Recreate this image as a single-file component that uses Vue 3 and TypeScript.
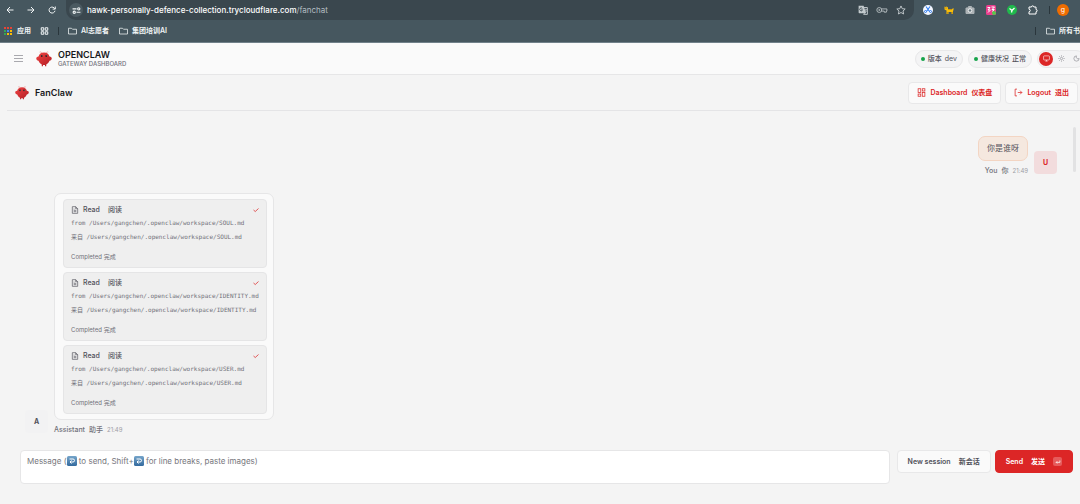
<script setup lang="ts">
import { ref } from 'vue'

interface ToolCall {
  id: number
  path: string
}

const root = '/Users/gangchen/.openclaw/workspace/'
const toolCalls: ToolCall[] = [
  { id: 1, path: root + 'SOUL.md' },
  { id: 2, path: root + 'IDENTITY.md' },
  { id: 3, path: root + 'USER.md' },
]
const folders: string[] = ['AI志愿者', '集团培训AI']
const appDots: string[] = ['#ea4335', '#ea4335', '#ea4335', '#34a853', '#4285f4', '#fbbc04', '#34a853', '#fbbc04', '#fbbc04']
const draft = ref<string>('')
const address = ref<string>('')
</script>

<template>
  <div class="page">
    <header class="browser">
      <div class="toolbar">
        <nav class="nav-buttons">
          <button type="button" aria-label="Back"><svg viewBox="0 0 16 16"><path d="M15 8H2M8 2L2 8l6 6" /></svg></button>
          <button type="button" aria-label="Forward"><svg viewBox="0 0 16 16"><path d="M1 8h13M8 2l6 6-6 6" /></svg></button>
          <button type="button" aria-label="Reload"><svg viewBox="0 0 16 16"><path d="M14 9.500A6 6 0 1 1 12.300 3.800L14.500 6M14.500 1v5.200H9.300" /></svg></button>
        </nav>
        <div class="omnibox">
          <button type="button" class="site-info" aria-label="Site settings">
            <svg viewBox="0 0 16 16"><path d="M1 5h7M8 11h7" /><circle cx="12" cy="5" r="2" /><circle cx="4" cy="11" r="2" /></svg>
          </button>
          <div class="address">
            <input id="address" v-model="address" type="text" autocomplete="off" />
            <label v-show="!address" for="address">hawk-personally-defence-collection.trycloudflare.com<span>/fanchat</span></label>
          </div>
          <div class="omni-actions">
            <button type="button" aria-label="Translate">
              <svg viewBox="0 0 16 16"><path d="M1 1h8l4 12H2a1 1 0 0 1-1-1z" fill="#c3cacd" stroke="none" /><path d="M9.500 4H15v11H9l2-3" /><path d="M6.800 5.400A2.300 2.300 0 1 0 7.200 8H5" stroke="#3a474e" /><path d="M10.500 7h4M12.500 6v1M11 11c1.500-1 2.300-2.500 2.500-4M11.500 8.500l2.500 2.500" stroke-width="1" /></svg>
            </button>
            <button type="button" aria-label="Passwords">
              <svg class="key" viewBox="0 0 22 16"><circle cx="6" cy="8" r="4.500" /><circle cx="6" cy="8" r="1" /><path d="M10 6h10v4h-1v2h-4v-2h-5" /></svg>
            </button>
            <button type="button" aria-label="Bookmark">
              <svg viewBox="0 0 16 16"><path d="M8 1.500l2 4.400 4.700.5-3.500 3.200 1 4.800L8 12l-4.200 2.400 1-4.800L1.300 6.400 6 5.900z" /></svg>
            </button>
          </div>
        </div>
        <div class="extensions">
          <button type="button" aria-label="Scissors extension">
            <svg viewBox="0 0 20 20"><circle cx="10" cy="10" r="10" fill="#f4f8ff" stroke="none" /><path d="M6 3l7 10M14 3L7 13" stroke="#2f7df0" stroke-width="2.200" /><circle cx="5" cy="13" r="2" stroke="#2f7df0" /><circle cx="15" cy="13" r="2" stroke="#2f7df0" /></svg>
          </button>
          <button type="button" aria-label="Tiger extension">
            <svg viewBox="0 0 20 20"><path d="M1 3l2 1 2-1 3 2v3h8l3-2v4l-1 2v6h-3v-4H9v4H5v-7L1 9z" fill="#f7bd0c" stroke="none" /><path d="M10 8v2M14 8v2M3 6h2M6 16h2M15 16h3" stroke="#8a5c06" stroke-width="1.500" /></svg>
          </button>
          <button type="button" aria-label="Camera extension">
            <svg viewBox="0 0 20 20"><path d="M2 6h4l1-3h6l1 3h4v11H2z" fill="#adb4b7" stroke="#adb4b7" /><circle cx="10" cy="11" r="3.500" fill="#66767d" stroke="#f1f3f4" stroke-width="2" /></svg>
          </button>
          <button type="button" aria-label="Pink extension">
            <svg viewBox="0 0 20 20"><rect width="20" height="20" rx="3" fill="#ea3f8e" stroke="none" /><path d="M3 5h5L4 10h5M4 15l4-4M11 4h6l-5 5h5M12 13l4-3" stroke="#fff" /><circle cx="16" cy="16" r="4" fill="#55c94b" stroke="none" /></svg>
          </button>
          <button type="button" aria-label="Green extension">
            <svg viewBox="0 0 20 20"><circle cx="10" cy="10" r="10" fill="#20b94c" stroke="none" /><path d="M5 7l5 4 5-5M10 11l-1 4" stroke="#fff" stroke-width="2.500" /></svg>
          </button>
          <button type="button" aria-label="Extensions">
            <svg viewBox="0 0 20 20"><path d="M2 4h5a2.300 2.300 0 0 1 4.600 0H16v5a2.300 2.300 0 0 1 0 4.600V18H2v-4.500a2.500 2.500 0 0 0 0-5z" stroke="#fff" stroke-width="2" /></svg>
          </button>
          <i class="divider"></i>
          <button type="button" class="profile">g</button>
        </div>
      </div>
      <nav class="bookmarks">
        <a href="#apps"><span class="app-dots"><i v-for="(c, i) in appDots" :key="i" :style="{ background: c }"></i></span>应用</a>
        <a href="#grid" aria-label="Grid" class="grid-link"><svg viewBox="0 0 16 16"><path d="M1.500 1.500h5v5h-5zM9.500 1.500h5v5h-5zM1.500 9.500h5v5h-5zM9.500 9.500h5v5h-5z" stroke-width="2" /></svg></a>
        <i class="divider"></i>
        <a v-for="name in folders" :key="name" href="#folder" class="folder"><svg viewBox="0 0 18 16"><path d="M1 2.500h6l2 2h8v9.500H1z" /></svg>{{ name }}</a>
        <span class="all-bookmarks">
          <i class="divider"></i>
          <a href="#all" class="folder"><svg viewBox="0 0 18 16"><path d="M1 2.500h6l2 2h8v9.500H1z" /></svg>所有书</a>
        </span>
      </nav>
    </header>

    <svg class="defs" aria-hidden="true">
      <defs>
        <linearGradient id="shell" x1="0" y1="0" x2="1" y2="1"><stop offset="0" stop-color="#f04444" /><stop offset="1" stop-color="#b01c22" /></linearGradient>
        <symbol id="claw" viewBox="0 0 32 32">
          <path d="M12 4C11 2 9.500 1.500 8 2M20 4c1-2 2.500-2.500 4-2" fill="none" stroke="#e86a6a" stroke-width="1" stroke-linecap="round" />
          <path d="M16 3c6 0 9.500 3 11 8 3 0 4.500 2 4.500 4s-2 4-4.500 4.500c-1.500 3.500-3.500 6-6.500 7.500v3.500h-2.500V28h-4v2.500h-2.500V27C8.500 25.500 6.500 23 5 19.500 2.500 19 .5 17 .5 15s1.500-4 4.500-4c1.500-5 5-8 11-8z" fill="url(#shell)" />
          <circle cx="11.500" cy="10" r="1.800" fill="#2a2024" /><circle cx="20.500" cy="10" r="1.800" fill="#2a2024" />
          <circle cx="12" cy="9.500" r=".7" fill="#1cb8a8" /><circle cx="21" cy="9.500" r=".7" fill="#1cb8a8" />
        </symbol>
        <linearGradient id="keycap" x1="0" y1="0" x2="0" y2="1"><stop offset="0" stop-color="#76a5ca" /><stop offset="1" stop-color="#336a9e" /></linearGradient>
        <symbol id="return" viewBox="0 0 20 20">
          <rect width="20" height="20" rx="3" fill="url(#keycap)" />
          <path d="M5 6h7a3 3 0 0 1 0 6H6M9 9l-3 3 3 3" fill="none" stroke="#fff" stroke-width="2" />
        </symbol>
      </defs>
    </svg>

    <header class="topbar">
      <button type="button" class="menu" aria-label="Menu"><i></i><i></i><i></i></button>
      <svg class="logo"><use href="#claw" /></svg>
      <div class="brand">
        <strong>OPENCLAW</strong>
        <small>GATEWAY DASHBOARD</small>
      </div>
      <div class="status">
        <span class="pill"><i></i><span>版本</span><span class="value">dev</span></span>
        <span class="pill"><i></i><span>健康状况</span><span>正常</span></span>
        <div class="themes">
          <button type="button" class="active" aria-label="System theme"><svg viewBox="0 0 24 24"><rect x="2" y="3" width="20" height="14" rx="2" /><path d="M8 21h8M12 17v4" /></svg></button>
          <button type="button" aria-label="Light theme"><svg viewBox="0 0 24 24"><circle cx="12" cy="12" r="4" /><path d="M12 1v4M12 19v4M1 12h4M19 12h4M4 4l3 3M17 17l3 3M4 20l3-3M17 7l3-3" /></svg></button>
          <button type="button" aria-label="Dark theme"><svg viewBox="0 0 24 24"><path d="M12 3a6.500 6.500 0 0 0 9 9 9 9 0 1 1-9-9z" /></svg></button>
        </div>
      </div>
    </header>

    <main>
      <div class="subbar">
        <svg class="logo small"><use href="#claw" /></svg>
        <h1>FanClaw</h1>
        <div class="links">
          <a href="#dashboard" class="action"><svg viewBox="0 0 24 24"><rect x="3" y="2" width="7" height="10" /><rect x="14" y="2" width="7" height="6" /><rect x="14" y="12" width="7" height="10" /><rect x="3" y="16" width="7" height="6" /></svg><span>Dashboard</span><span>仪表盘</span></a>
          <button type="button" class="action"><svg viewBox="0 0 24 24"><path d="M8 21H3V3h5M16 17l5-5-5-5M21 12H10" /></svg><span>Logout</span><span>退出</span></button>
        </div>
      </div>

      <section class="thread">
        <i class="thumb"></i>
        <article class="message user">
          <div class="body">
            <p class="bubble">你是谁呀</p>
            <p class="meta"><span>You</span><span>你</span><time>21:49</time></p>
          </div>
          <div class="avatar">U</div>
        </article>
        <article class="message assistant">
          <div class="avatar">A</div>
          <div class="body">
            <div class="stack">
              <section v-for="call in toolCalls" :key="call.id" class="tool">
                <h2>
                  <svg viewBox="0 0 24 24"><path d="M14 2H4v20h16V8zM14 2v6h6M8 13h8M8 17h8M8 9h2" /></svg>
                  <span>Read</span><span>阅读</span>
                  <svg class="check" viewBox="0 0 24 24"><path d="M22 6L9 18l-7-6" /></svg>
                </h2>
                <code>from {{ call.path }}</code>
                <code>来自 {{ call.path }}</code>
                <p>Completed 完成</p>
              </section>
            </div>
            <p class="meta"><span>Assistant</span><span>助手</span><time>21:49</time></p>
          </div>
        </article>
      </section>

      <form class="composer" @submit.prevent>
        <div class="field">
          <textarea id="draft" v-model="draft"></textarea>
          <label v-show="!draft" for="draft">Message (<svg><use href="#return" /></svg> to send, Shift+<svg><use href="#return" /></svg> for line breaks, paste images)</label>
        </div>
        <button type="button" class="new"><span>New session</span><span>新会话</span></button>
        <button type="submit" class="send"><span>Send</span><span>发送</span><kbd><svg viewBox="0 0 16 16"><path d="M13 4v5H3M6 6L3 9l3 3" /></svg></kbd></button>
      </form>
    </main>
  </div>
</template>

<style>
body {
  margin: 0;
  background: #f4f4f4;
}
</style>

<style scoped>
.page {
  min-height: 100vh;
  display: flex;
  flex-direction: column;
  overflow: hidden;
  font-family: Inter, "Noto Sans CJK SC", sans-serif;
  font-size: 7px;
  line-height: 10px;
  color: #52525b;
}
.page * {
  box-sizing: border-box;
}
p, h1, h2 {
  margin: 0;
}
a {
  text-decoration: none;
  color: inherit;
}
button {
  font: inherit;
  color: inherit;
  background: none;
  border: 0;
  padding: 0;
}
svg {
  flex: none;
  fill: none;
  stroke: currentColor;
  stroke-width: 2;
}
.defs {
  position: absolute;
  width: 0;
  height: 0;
}

.browser {
  background: #46575f;
  color: #f1f5f6;
  border-bottom: 1px solid #71818a;
}
.toolbar {
  height: 20px;
  display: flex;
  align-items: center;
  padding: 0 11px 0 5px;
}
.toolbar button {
  display: grid;
  place-items: center;
}
.nav-buttons {
  display: flex;
  gap: 11px;
  margin-right: 9px;
}
.nav-buttons svg {
  display: block;
  width: 10px;
  height: 8px;
}
.omnibox {
  flex: 1;
  height: 20px;
  border-radius: 0 0 10px 10px;
  background: #3a474e;
  display: flex;
  align-items: center;
  gap: 4px;
  padding: 0 8px 0 3px;
}
.site-info {
  width: 14px;
  height: 14px;
  border-radius: 7px;
  background: #4b5a61;
}
.site-info svg {
  width: 9px;
  height: 9px;
}
.address {
  flex: 1;
  position: relative;
  height: 14px;
}
.address input {
  width: 100%;
  height: 100%;
  border: 0;
  padding: 0;
  background: transparent;
  color: #fff;
  font: 500 8px Inter, sans-serif;
}
.address label {
  position: absolute;
  inset: 0;
  font-size: 8px;
  line-height: 14px;
  font-weight: 500;
  color: #fff;
}
.address span {
  font-weight: 400;
  color: #b3bdc1;
}
.omni-actions {
  display: flex;
  align-items: center;
  gap: 8px;
  color: #c3cacd;
}
.omni-actions svg {
  width: 10px;
  height: 10px;
  stroke-width: 1.500;
}
.omni-actions .key {
  width: 12px;
}
.extensions {
  display: flex;
  align-items: center;
  gap: 11px;
  margin-left: 9px;
}
.extensions svg {
  width: 10px;
  height: 10px;
}
.extensions .divider {
  margin-right: -4px;
}
.profile {
  width: 12px;
  height: 12px;
  border-radius: 6px;
  background: #ef6c00;
  color: #fff;
}
.divider {
  width: 1px;
  height: 8px;
  background: #2a363c;
}
.bookmarks {
  height: 22px;
  display: flex;
  align-items: center;
  font-weight: 600;
  padding-left: 4px;
}
.bookmarks a {
  display: flex;
  align-items: center;
  gap: 5px;
  white-space: nowrap;
}
.bookmarks svg {
  width: 9px;
  height: 8px;
  stroke-width: 1.500;
}
.app-dots {
  display: grid;
  grid-template-columns: repeat(3, 2px);
  gap: 1px;
}
.app-dots i {
  height: 2px;
}
.bookmarks .grid-link {
  margin: 0 9px;
}
.bookmarks > .divider {
  margin-right: 9px;
}
.bookmarks .folder {
  gap: 4px;
  margin-right: 10px;
}
.all-bookmarks {
  margin-left: auto;
  display: flex;
  align-items: center;
  gap: 10px;
}
.all-bookmarks .folder {
  margin-right: 0;
}

.topbar {
  height: 32px;
  display: flex;
  align-items: center;
  padding-left: 14px;
  background: #fafafa;
  border-bottom: 1px solid #e6e6e7;
}
.menu {
  width: 9px;
  display: grid;
  gap: 2px;
  margin-right: 13px;
}
.menu i {
  height: 1px;
  background: #a9a9ae;
}
.logo {
  width: 16px;
  height: 16px;
  stroke: none;
  margin-right: 6px;
}
.logo.small {
  width: 14px;
  height: 14px;
}
.brand {
  display: grid;
}
.brand strong {
  font-size: 9px;
  line-height: 10px;
  font-weight: 600;
  color: #18181b;
}
.brand small {
  font-size: 6px;
  line-height: 8px;
  font-weight: 500;
  color: #71717a;
}
.status {
  margin-left: auto;
  margin-right: -5px;
  display: flex;
  align-items: center;
  gap: 5px;
}
.pill {
  height: 18px;
  display: flex;
  align-items: center;
  gap: 3px;
  padding: 0 5px;
  border: 1px solid #e8e8e9;
  border-radius: 9px;
  background: #f4f4f5;
  font-weight: 500;
}
.pill i {
  width: 4px;
  height: 4px;
  border-radius: 2px;
  background: #16a34a;
}
.pill .value {
  font-weight: 400;
}
.themes {
  height: 18px;
  display: flex;
  align-items: center;
  gap: 1px;
  padding: 0 1px;
  border: 1px solid #e8e8e9;
  border-radius: 9px;
  background: #f4f4f5;
}
.themes button {
  width: 14px;
  height: 14px;
  border-radius: 7px;
  display: grid;
  place-items: center;
  color: #85858c;
}
.themes .active {
  background: #dc2626;
  color: #fff;
}
.themes svg {
  width: 7px;
  height: 7px;
}

main {
  flex: 1;
  display: flex;
  flex-direction: column;
}
.subbar {
  height: 36px;
  display: flex;
  align-items: center;
  margin-left: 7px;
  padding: 0 2px 0 8px;
  border-bottom: 1px solid #e4e4e6;
}
.subbar h1 {
  font-size: 9px;
  line-height: 12px;
  font-weight: 600;
  color: #18181b;
}
.links {
  margin-left: auto;
  display: flex;
  gap: 4px;
}
.action {
  height: 22px;
  display: flex;
  align-items: center;
  gap: 4px;
  padding: 0 8px;
  border: 1px solid #e8e8e9;
  border-radius: 4px;
  background: #fafafa;
  color: #dc2626;
  font-weight: 600;
}
.action svg {
  width: 9px;
  height: 9px;
}

.thread {
  flex: 1;
  position: relative;
  padding: 25px 23px 0 25px;
  display: flex;
  flex-direction: column;
  gap: 17px;
}
.thumb {
  position: absolute;
  top: 16px;
  right: 4px;
  width: 3px;
  height: 45px;
  border-radius: 2px;
  background: #e2e2e3;
}
.message {
  display: flex;
  align-items: flex-end;
  gap: 6px;
}
.message.user {
  justify-content: flex-end;
}
.avatar {
  width: 23px;
  height: 23px;
  margin-bottom: 2px;
  border-radius: 4px;
  display: grid;
  place-items: center;
  background: #f2f2f3;
  font-weight: 700;
}
.user .avatar {
  background: #f2dcdd;
  color: #dc2626;
}
.body {
  display: flex;
  flex-direction: column;
}
.user .body {
  align-items: flex-end;
}
.bubble {
  height: 25px;
  padding: 0 8px;
  border: 1px solid #f3d5c3;
  border-radius: 7px;
  background: #f5e8df;
  font-size: 8px;
  line-height: 23px;
}
.meta {
  display: flex;
  gap: 4px;
  line-height: 10px;
  margin-top: 5px;
  font-weight: 500;
  color: #71717a;
}
.meta time {
  font-size: 6px;
  font-weight: 400;
  color: #a0a0a6;
}
.stack {
  width: 220px;
  padding: 5px 7px 5px 8px;
  border: 1px solid #e6e6e7;
  border-radius: 7px;
  background: #fafafa;
  display: grid;
  gap: 4px;
}
.tool {
  height: 69px;
  padding: 4px 7px;
  border: 1px solid #e5e5e6;
  border-radius: 4px;
  background: #efefef;
}
.tool h2 {
  display: flex;
  align-items: center;
  height: 12px;
  gap: 8px;
  font-size: 7px;
  font-weight: 500;
}
.tool h2 svg {
  width: 8px;
  height: 8px;
  margin-right: -4px;
}
.tool h2 .check {
  width: 6px;
  height: 6px;
  margin: 0 0 0 auto;
  color: #dc2626;
  stroke-width: 3;
}
.tool code {
  display: block;
  font: 6px/14px "DejaVu Sans Mono", "Noto Sans CJK SC", monospace;
  white-space: nowrap;
  color: #71717a;
}
.tool p {
  margin-top: 7px;
  font-size: 6px;
  line-height: 12px;
  color: #71717a;
}

.composer {
  display: flex;
  align-items: flex-start;
  padding: 15px 7px 21px 20px;
}
.field {
  flex: 1;
  position: relative;
  height: 34px;
  margin-right: 7px;
}
.field textarea {
  display: block;
  width: 100%;
  height: 100%;
  padding: 6px;
  resize: none;
  border: 1px solid #e6e6e7;
  border-radius: 4px;
  background: #fff;
  font: 8px/12px Inter, sans-serif;
}
.field label {
  position: absolute;
  top: 5px;
  left: 7px;
  font-size: 8px;
  line-height: 12px;
  color: #77777d;
}
.field label svg {
  display: inline-block;
  width: 10px;
  height: 10px;
  vertical-align: -2px;
  stroke: none;
}
.new, .send {
  height: 23px;
  display: flex;
  align-items: center;
  gap: 8px;
  padding: 0 10px;
  border: 1px solid #e8e8e9;
  border-radius: 4px;
  background: #fafafa;
  font-weight: 600;
}
.send {
  margin-left: 4px;
  background: #dc2626;
  border-color: #dc2626;
  color: #fff;
}
.send kbd {
  width: 9px;
  height: 9px;
  border-radius: 2px;
  background: #e65b5b;
  display: grid;
  place-items: center;
}
.send kbd svg {
  width: 6px;
  height: 6px;
}
</style>
